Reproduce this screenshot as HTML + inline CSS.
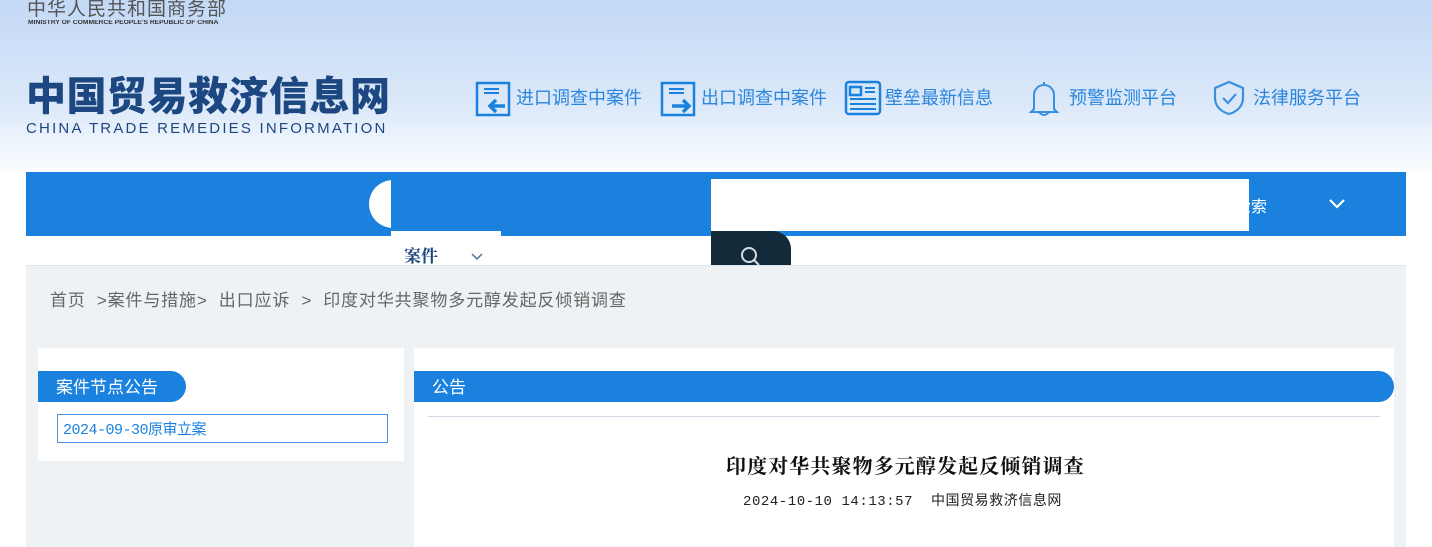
<!DOCTYPE html>
<html><head><meta charset="utf-8"><style>
*{margin:0;padding:0;box-sizing:border-box}
body{width:1432px;height:547px;overflow:hidden;position:relative;background:#fff;font-family:"Liberation Sans","Noto Sans CJK SC",sans-serif}
.a{position:absolute}
.hdr{left:0;top:0;width:1432px;height:172px;background:linear-gradient(#c3d9f6,#dbe8f9 60%,#fbfdff)}
.nav{color:#2a86dc;font-size:18px;top:84px;white-space:nowrap}
</style></head><body>
<div class="a hdr"></div>
<div class="a" style="left:27px;top:-6px;font-size:19px;color:#555;letter-spacing:1px">中华人民共和国商务部</div>
<div class="a" style="left:28px;top:20px;font-size:6px;color:#333;font-weight:bold;letter-spacing:0px;transform:scaleX(1.12);transform-origin:left;white-space:nowrap">MINISTRY OF COMMERCE PEOPLE'S REPUBLIC OF CHINA</div>
<div class="a" style="left:26px;top:68px;font-size:40px;font-weight:900;color:#1d4781;letter-spacing:0.5px;font-family:'Noto Sans CJK SC',sans-serif;line-height:50px">中国贸易救济信息网</div>
<div class="a" style="left:26px;top:120px;font-size:15px;color:#1d4781;letter-spacing:2.2px;white-space:nowrap">CHINA TRADE REMEDIES INFORMATION</div>

<svg class="a" style="left:475px;top:79px" width="36" height="38" viewBox="0 0 36 38" fill="none" stroke="#1a82de" stroke-width="2.5"><path d="M12 4h12M2 4h32v32H2z"/><path d="M9 10h15M9 14h15" stroke-width="2"/><path d="M30 27H16M21 21l-6 6 6 6" stroke-width="3.5"/></svg>
<div class="a nav" style="left:516px">进口调查中案件</div>
<svg class="a" style="left:660px;top:79px" width="36" height="38" viewBox="0 0 36 38" fill="none" stroke="#1a82de" stroke-width="2.5"><path d="M2 4h32v32H2z"/><path d="M9 10h15M9 14h15" stroke-width="2"/><path d="M12 27h16M23 21l6 6-6 6" stroke-width="3.5"/></svg>
<div class="a nav" style="left:701px">出口调查中案件</div>
<svg class="a" style="left:844px;top:80px" width="38" height="36" viewBox="0 0 38 36" fill="none" stroke="#1a82de" stroke-width="2.5"><rect x="2" y="2" width="34" height="32" rx="3"/><rect x="6" y="7" width="11" height="8"/><path d="M21 8h10M21 12h10M6 19h26M6 24h26M6 29h26" stroke-width="2"/></svg>
<div class="a nav" style="left:885px">壁垒最新信息</div>
<svg class="a" style="left:1028px;top:79px" width="32" height="38" viewBox="0 0 32 38" fill="none" stroke="#3a90e0" stroke-width="2"><path d="M16 3v3M6 30V16a10 10 0 0 1 20 0v14l3 3H3z"/><path d="M11 33q5 6 10 0"/></svg>
<div class="a nav" style="left:1069px">预警监测平台</div>
<svg class="a" style="left:1212px;top:80px" width="34" height="36" viewBox="0 0 34 36" fill="none" stroke="#3a90e0" stroke-width="2.2"><path d="M17 2L3 8v10c0 9 7 14 14 16 7-2 14-7 14-16V8z"/><path d="M11 18l5 5 8-9"/></svg>
<div class="a nav" style="left:1253px">法律服务平台</div>

<div class="a" style="left:26px;top:172px;width:1380px;height:64px;background:#1a82de"></div>
<div class="a" style="left:369px;top:180px;width:44px;height:48px;border-radius:24px 0 0 24px;background:#fff"></div>
<div class="a" style="left:391px;top:180px;width:22px;height:51px;background:#1a82de"></div>
<div class="a" style="left:391px;top:231px;width:110px;height:51px;background:#fff"></div>
<div class="a" style="left:404px;top:242px;font-size:17px;font-weight:bold;color:#1d4781;font-family:'Noto Serif CJK SC',serif">案件</div>
<svg class="a" style="left:470px;top:252px" width="14" height="10"><path d="M2 2l5 5 5-5" stroke="#56709a" stroke-width="1.5" fill="none"/></svg>
<div class="a" style="left:711px;top:179px;width:538px;height:52px;background:#fff"></div>
<div class="a" style="left:711px;top:231px;width:80px;height:34px;background:#132a3b;border-radius:0 18px 0 0"></div>
<svg class="a" style="left:738px;top:244px" width="26" height="22"><circle cx="11" cy="11" r="7" stroke="#d8dde2" stroke-width="2" fill="none"/><path d="M16 16l5 5" stroke="#d8dde2" stroke-width="2"/></svg>
<div class="a" style="left:1249px;top:193px;font-size:16px;color:#fff;width:18px;overflow:hidden;direction:rtl;white-space:nowrap">检索</div>
<svg class="a" style="left:1328px;top:198px" width="18" height="12"><path d="M2 2l7 7 7-7" stroke="#fff" stroke-width="2.2" fill="none"/></svg>

<div class="a" style="left:26px;top:265px;width:1380px;height:282px;background:#eef2f5;border-top:1px solid #dde4ec"></div>
<div class="a" style="left:50px;top:286px;font-size:17px;color:#666;white-space:pre;letter-spacing:0.85px">首页  &gt;案件与措施&gt;  出口应诉  &gt;  印度对华共聚物多元醇发起反倾销调查</div>

<div class="a" style="left:38px;top:348px;width:366px;height:113px;background:#fff"></div>
<div class="a" style="left:38px;top:371px;width:148px;height:31px;background:#1a82de;border-radius:0 16px 16px 0;color:#fff;font-size:17px;padding:2px 0 0 18px">案件节点公告</div>
<div class="a" style="left:57px;top:414px;width:331px;height:29px;border:1px solid #4a90e2;color:#1a82de;font-size:15px;padding:3px 0 0 5px;font-family:'Liberation Mono','Noto Sans CJK SC',monospace;letter-spacing:-0.5px">2024-09-30原审立案</div>

<div class="a" style="left:414px;top:348px;width:980px;height:199px;background:#fff"></div>
<div class="a" style="left:414px;top:371px;width:980px;height:31px;background:#1a82de;border-radius:0 16px 16px 0;color:#fff;font-size:17px;padding:2px 0 0 18px">公告</div>
<div class="a" style="left:428px;top:416px;width:952px;height:1px;background:#cfd8e3"></div>
<div class="a" style="left:726px;top:450px;font-size:20px;font-weight:bold;color:#111;font-family:'Noto Serif CJK SC',serif;letter-spacing:1.1px">印度对华共聚物多元醇发起反倾销调查</div>
<div class="a" style="left:743px;top:490px;font-size:14px;color:#222;white-space:pre;font-family:'Liberation Mono','Noto Sans CJK SC',monospace;letter-spacing:0.55px">2024-10-10 14:13:57  中国贸易救济信息网</div>
</body></html>
